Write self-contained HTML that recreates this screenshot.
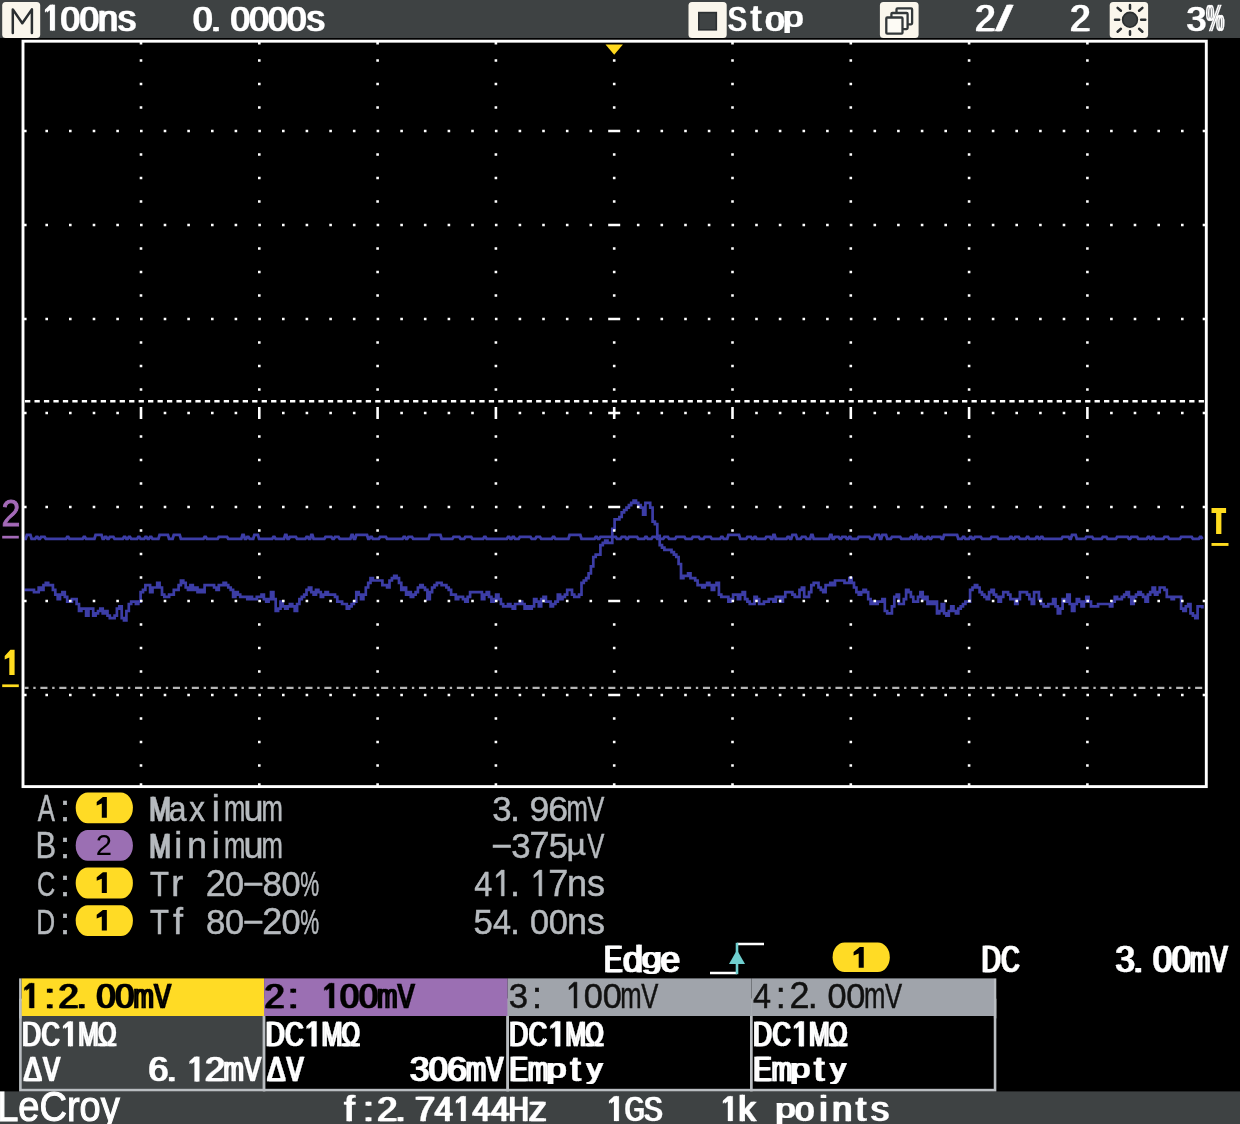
<!DOCTYPE html>
<html><head><meta charset="utf-8"><title>LeCroy</title>
<style>
html,body{margin:0;padding:0;background:#000;}
body{width:1240px;height:1124px;position:relative;overflow:hidden;font-family:"Liberation Sans",sans-serif;}
.abs{position:absolute;}
.bar{position:absolute;left:0;width:1240px;background:#3e4243;}
</style></head><body>
<svg class="abs" style="left:0;top:0;will-change:transform" width="1240" height="1124" viewBox="0 0 1240 1124">
<path d="M24.5 538.9H25.7L26.9 534.9H28.0H30.4L31.6 538.9H32.8H35.1L36.4 536.9H37.5L38.7 538.9H39.9L41.1 536.9H42.3H44.6L45.8 538.9H47.0H49.4H51.7H54.1H56.5H58.8H61.2H63.6H66.0L67.2 536.9H68.3L69.5 538.9H70.7H73.1H75.4H77.8H80.2H82.6L83.8 536.9H84.9L86.1 538.9H87.3H89.7H92.0H94.4L95.6 534.9H96.8H99.1H101.5L102.7 538.9H103.9L105.1 536.9H106.3L107.5 538.9H108.6L109.8 536.9H111.0H113.4L114.6 538.9H115.7H118.1H120.5H122.8L124.0 536.9H125.2L126.4 538.9H127.6L128.8 536.9H130.0L131.2 538.9H132.3H134.7H137.1L138.3 536.9H139.4L140.6 538.9H141.8H144.2L145.4 536.9H146.5L147.7 538.9H148.9L150.1 536.9H151.3L152.5 538.9H153.7H156.0H158.4L159.6 534.9H160.8H163.1H165.5H167.9L169.1 538.9H170.2H172.6L173.8 534.9H175.0H177.4H179.7L180.9 538.9H182.1H184.5H186.8H189.2H191.6H193.9H196.3H198.7H201.1H203.4L204.6 536.9H205.8L207.0 538.9H208.2H210.5H212.9H215.3H217.6L218.8 536.9H220.0H222.4H224.8H227.1L228.3 538.9H229.5H231.9H234.2H236.6H239.0H241.3L242.5 534.9H243.7L244.9 538.9H246.1L247.3 536.9H248.5L249.7 538.9H250.8H253.2L254.4 534.9H255.6H257.9L259.1 538.9H260.3H262.7H265.0H267.4H269.8H272.2L273.4 536.9H274.5L275.7 538.9H276.9H279.3H281.6H284.0L285.2 534.9H286.4L287.6 538.9H288.7L289.9 536.9H291.1H293.5H295.9L297.1 538.9H298.2H300.6H303.0H305.3L306.5 536.9H307.7L308.9 538.9H310.1L311.3 534.9H312.4L313.6 538.9H314.8H317.2H319.6H321.9H324.3L325.5 536.9H326.7H329.0H331.4L332.6 538.9H333.8L335.0 536.9H336.1H338.5L339.7 538.9H340.9H343.3H345.6H348.0H350.4L351.6 534.9H352.7L353.9 538.9H355.1L356.3 534.9H357.5H359.8H362.2H364.6H367.0L368.2 538.9H369.3L370.5 536.9H371.7L372.9 538.9H374.1H376.4H378.8L380.0 536.9H381.2H383.5H385.9L387.1 538.9H388.3H390.7H393.0H395.4H397.8H400.1H402.5L403.7 536.9H404.9L406.1 538.9H407.2L408.4 536.9H409.6H412.0L413.2 538.9H414.4H416.7H419.1H421.5H423.8H426.2H428.6L429.8 534.9H430.9H433.3H435.7H438.1H440.4L441.6 538.9H442.8H445.2H447.5H449.9H452.3L453.5 536.9H454.6H457.0H459.4L460.6 538.9H461.8H464.1L465.3 536.9H466.5H468.9H471.2L472.4 538.9H473.6H476.0H478.3H480.7H483.1L484.3 536.9H485.5L486.7 538.9H487.8H490.2H492.6H494.9H497.3H499.7H502.0H504.4H506.8L508.0 536.9H509.2L510.4 538.9H511.5L512.7 536.9H513.9L515.1 538.9H516.3H518.6L519.8 536.9H521.0H523.4H525.7H528.1H530.5L531.7 538.9H532.9H535.2L536.4 536.9H537.6H540.0L541.2 538.9H542.3H544.7H547.1H549.4H551.8L553.0 536.9H554.2L555.4 538.9H556.6H558.9H561.3H563.7H566.0H568.4L569.6 534.9H570.8H573.1H575.5H577.9H580.3L581.5 538.9H582.6H585.0H587.4H589.7H592.1H594.5L595.7 536.9H596.8L598.0 538.9H599.2L600.4 536.9H601.6H604.0H606.3H608.7H611.1H613.4H615.8L617.0 538.9H618.2H620.5L621.7 536.9H622.9H625.3L626.5 538.9H627.7L628.9 536.9H630.0H632.4H634.8H637.1L638.3 538.9H639.5H641.9H644.2L645.4 536.9H646.6L647.8 538.9H649.0H651.4L652.6 536.9H653.7H656.1L657.3 538.9H658.5H660.8H663.2L664.4 536.9H665.6H667.9L669.1 538.9H670.3H672.7H675.1L676.3 536.9H677.4H679.8H682.2H684.5L685.7 538.9H686.9H689.3H691.6L692.8 536.9H694.0H696.4H698.8L700.0 538.9H701.1H703.5L704.7 536.9H705.9H708.2H710.6L711.8 538.9H713.0H715.3H717.7H720.1L721.3 536.9H722.5L723.7 538.9H724.8H727.2L728.4 534.9H729.6H731.9H734.3H736.7H739.0L740.2 538.9H741.4H743.8H746.2L747.4 536.9H748.5H750.9L752.1 538.9H753.3L754.5 536.9H755.6L756.8 538.9H758.0H760.4H762.7H765.1L766.3 536.9H767.5H769.9L771.1 538.9H772.2L773.4 534.9H774.6L775.8 538.9H777.0H779.3H781.7H784.1H786.4L787.6 536.9H788.8L790.0 538.9H791.2L792.4 534.9H793.6H795.9L797.1 538.9H798.3H800.7L801.9 536.9H803.0H805.4L806.6 538.9H807.8H810.1L811.3 534.9H812.5L813.7 538.9H814.9H817.3H819.6H822.0H824.4H826.7H829.1L830.3 534.9H831.5L832.7 538.9H833.8L835.0 536.9H836.2H838.6L839.8 538.9H841.0L842.2 536.9H843.3H845.7L846.9 538.9H848.1L849.3 536.9H850.4L851.6 538.9H852.8H855.2H857.5L858.7 536.9H859.9H862.3H864.7H867.0H869.4L870.6 538.9H871.8H874.1L875.3 534.9H876.5H878.9L880.1 538.9H881.2L882.4 534.9H883.6H886.0L887.2 538.9H888.4H890.7L891.9 536.9H893.1H895.5H897.8H900.2L901.4 538.9H902.6H904.9H907.3H909.7L910.9 536.9H912.1L913.3 538.9H914.4L915.6 534.9H916.8L918.0 538.9H919.2L920.4 536.9H921.5L922.7 538.9H923.9H926.3L927.5 536.9H928.6L929.8 538.9H931.0L932.2 536.9H933.4H935.8H938.1H940.5L941.7 538.9H942.9L944.1 534.9H945.2H947.6H950.0H952.3H954.7H957.1L958.3 538.9H959.5H961.8L963.0 536.9H964.2L965.4 538.9H966.6H968.9L970.1 536.9H971.3L972.5 538.9H973.7L974.9 536.9H976.0H978.4H980.8L982.0 538.9H983.2H985.5H987.9H990.3L991.5 536.9H992.6H995.0H997.4L998.6 538.9H999.7H1002.1H1004.5H1006.9H1009.2L1010.4 536.9H1011.6L1012.8 538.9H1014.0L1015.2 536.9H1016.3H1018.7L1019.9 538.9H1021.1H1023.4H1025.8L1027.0 536.9H1028.2L1029.4 538.9H1030.6H1032.9H1035.3L1036.5 536.9H1037.7L1038.9 538.9H1040.0L1041.2 536.9H1042.4L1043.6 538.9H1044.8H1047.1H1049.5H1051.9H1054.3H1056.6H1059.0H1061.4L1062.6 536.9H1063.7H1066.1H1068.5L1069.7 538.9H1070.8L1072.0 534.9H1073.2H1075.6L1076.8 538.9H1077.9H1080.3H1082.7H1085.1L1086.3 536.9H1087.4H1089.8H1092.2L1093.4 538.9H1094.5H1096.9H1099.3H1101.6L1102.8 536.9H1104.0H1106.4L1107.6 538.9H1108.8H1111.1H1113.5H1115.9L1117.1 536.9H1118.2H1120.6H1123.0H1125.3H1127.7L1128.9 538.9H1130.1L1131.3 536.9H1132.5H1134.8H1137.2L1138.4 538.9H1139.6H1141.9H1144.3H1146.7L1147.9 536.9H1149.0L1150.2 538.9H1151.4L1152.6 536.9H1153.8L1155.0 538.9H1156.2H1158.5H1160.9H1163.3L1164.5 536.9H1165.6H1168.0L1169.2 538.9H1170.4H1172.7H1175.1H1177.5H1179.9L1181.1 536.9H1182.2H1184.6H1187.0H1189.3H1191.7L1192.9 538.9H1194.1H1196.4H1198.8L1200.0 536.9H1201.2L1202.4 538.9" stroke="#3c3da6" stroke-width="2.9" fill="none" stroke-linejoin="miter"/>
<path d="M24.5 589.9H26.9H29.2H31.6H34.0V592.2H36.4H38.7V587.5H41.1V589.9H43.5V585.1H45.8V582.8H48.2V585.1H50.6H52.9V589.9H55.3V594.6H57.7V599.2H60.0V594.6H62.4V592.2H64.8V596.9H67.2V601.6H69.5H71.9V599.2H74.3H76.6V604.0H79.0V611.0H81.4V608.6H83.8H86.1V615.7H88.5V608.6H90.9H93.2V615.7H95.6V613.4H98.0V611.0H100.3V608.6H102.7V613.4H105.1V611.0H107.5V615.7H109.8V618.1H112.2H114.6V615.7H116.9V608.6H119.3V606.3H121.7V618.1H124.0V620.4H126.4V611.0H128.8V604.0H131.2V601.6H133.5H135.9V604.0H138.3V601.6H140.6V592.2H143.0V589.9H145.4V585.1H147.7H150.1V592.2H152.5V587.5H154.9H157.2V582.8H159.6V587.5H162.0V594.6H164.3V596.9H166.7H169.1V594.6H171.4H173.8V589.9H176.2H178.6V585.1H180.9V580.5H183.3V582.8H185.7V587.5H188.0V589.9H190.4V585.1H192.8V589.9H195.1V587.5H197.5V592.2H199.9V589.9H202.3V592.2H204.6V585.1H207.0H209.4H211.7H214.1V587.5H216.5V589.9H218.8V585.1H221.2H223.6V582.8H226.0V585.1H228.3V587.5H230.7V589.9H233.1V596.9H235.4V592.2H237.8V594.6H240.2V596.9H242.5H244.9H247.3V599.2H249.7V596.9H252.0V599.2H254.4H256.8V596.9H259.1H261.5V594.6H263.9V599.2H266.2V601.6H268.6V599.2H271.0V592.2H273.4V599.2H275.7V611.0H278.1V608.6H280.5V601.6H282.8V606.3H285.2V608.6H287.6V606.3H289.9V604.0H292.3V606.3H294.7V611.0H297.1V604.0H299.4V599.2H301.8V596.9H304.2V594.6H306.5V589.9H308.9V587.5H311.3V592.2H313.6V594.6H316.0V589.9H318.4V592.2H320.8V596.9H323.1V594.6H325.5V592.2H327.9V594.6H330.2H332.6H335.0V596.9H337.3V601.6H339.7H342.1V604.0H344.5H346.8V608.6H349.2V606.3H351.6V604.0H353.9V601.6H356.3V592.2H358.7V594.6H361.0V599.2H363.4V594.6H365.8V587.5H368.2V582.8H370.5V578.1H372.9V580.5H375.3H377.6H380.0H382.4V585.1H384.7H387.1V587.5H389.5V580.5H391.9V578.1H394.2V575.8H396.6V578.1H399.0V582.8H401.3V589.9H403.7V587.5H406.1V594.6H408.4V592.2H410.8V596.9H413.2V594.6H415.6V592.2H417.9V587.5H420.3V585.1H422.7V587.5H425.0V589.9H427.4V599.2H429.8V592.2H432.1V587.5H434.5V585.1H436.9V582.8H439.3H441.6V585.1H444.0H446.4V587.5H448.7V589.9H451.1V594.6H453.5H455.8V599.2H458.2V596.9H460.6H463.0V599.2H465.3V601.6H467.7V596.9H470.1V592.2H472.4H474.8H477.2H479.5H481.9V599.2H484.3V594.6H486.7V592.2H489.0V596.9H491.4V601.6H493.8V599.2H496.1V594.6H498.5V599.2H500.9V604.0H503.2V606.3H505.6H508.0V604.0H510.4V606.3H512.7V608.6H515.1V604.0H517.5H519.8V601.6H522.2V604.0H524.6V608.6H526.9V606.3H529.3V608.6H531.7V606.3H534.1V599.2H536.4V601.6H538.8V606.3H541.2V599.2H543.5V596.9H545.9V601.6H548.3H550.6V606.3H553.0V604.0H555.4V601.6H557.8V594.6H560.1V599.2H562.5V596.9H564.9V594.6H567.2V589.9H569.6H572.0V594.6H574.3V596.9H576.7H579.1V594.6H581.5V582.8H583.8V580.5H586.2V578.1H588.6V573.4H590.9V566.4H593.3V557.0H595.7V554.6H598.0H600.4V545.2H602.8V542.9H605.2V540.5H607.5V542.9H609.9H612.3V528.8H614.6V519.4H617.0H619.4V517.0H621.7V512.3H624.1V510.0H626.5V507.6H628.9V505.2H631.2V502.9H633.6V500.6H636.0V502.9H638.3V505.2H640.7V507.6H643.1V514.6H645.4V502.9H647.8H650.2V507.6H652.6V521.7H654.9V524.1H657.3V535.8H659.7V545.2H662.0V547.6H664.4V549.9H666.8H669.1H671.5V552.2H673.9V554.6H676.3V557.0H678.6V564.0H681.0V578.1H683.4V575.8H685.7H688.1V573.4H690.5V578.1H692.8H695.2V580.5H697.6V585.1H700.0H702.3V587.5H704.7V585.1H707.1V582.8H709.4V585.1H711.8V589.9H714.2V585.1H716.5V582.8H718.9V594.6H721.3V596.9H723.7H726.0H728.4V601.6H730.8V599.2H733.1V594.6H735.5H737.9V599.2H740.2V594.6H742.6V592.2H745.0V599.2H747.4V601.6H749.7V604.0H752.1H754.5V596.9H756.8V599.2H759.2V604.0H761.6H763.9V601.6H766.3H768.7V599.2H771.1H773.4V601.6H775.8V596.9H778.2H780.5V601.6H782.9V596.9H785.3V592.2H787.6H790.0H792.4V594.6H794.8V596.9H797.1H799.5V589.9H801.9V587.5H804.2V596.9H806.6H809.0V592.2H811.3V585.1H813.7V582.8H816.1H818.5V587.5H820.8V589.9H823.2V592.2H825.6V585.1H827.9H830.3V582.8H832.7V585.1H835.0V580.5H837.4H839.8H842.2H844.5V582.8H846.9H849.3V578.1H851.6V582.8H854.0V587.5H856.4V592.2H858.7V594.6H861.1V592.2H863.5V589.9H865.9V592.2H868.2V599.2H870.6V604.0H873.0V601.6H875.3V604.0H877.7V601.6H880.1H882.4V599.2H884.8V611.0H887.2V613.4H889.6H891.9V606.3H894.3V596.9H896.7V594.6H899.0V604.0H901.4H903.8V599.2H906.1V589.9H908.5V592.2H910.9V596.9H913.3V601.6H915.6H918.0V596.9H920.4V592.2H922.7V599.2H925.1V596.9H927.5V604.0H929.8V601.6H932.2V604.0H934.6V601.6H937.0V613.4H939.3V611.0H941.7V604.0H944.1V613.4H946.4V615.7H948.8V611.0H951.2V606.3H953.5V611.0H955.9V613.4H958.3V608.6H960.7V606.3H963.0V604.0H965.4V601.6H967.8H970.1V589.9H972.5V587.5H974.9V585.1H977.2V587.5H979.6V592.2H982.0V594.6H984.4V596.9H986.7V599.2H989.1V592.2H991.5V589.9H993.8V594.6H996.2V596.9H998.6V601.6H1000.9V596.9H1003.3V592.2H1005.7H1008.1V594.6H1010.4V599.2H1012.8H1015.2V604.0H1017.5V599.2H1019.9V592.2H1022.3H1024.6H1027.0V594.6H1029.4V599.2H1031.8V604.0H1034.1V592.2H1036.5H1038.9V599.2H1041.2V604.0H1043.6V606.3H1046.0H1048.3V604.0H1050.7H1053.1V599.2H1055.5V606.3H1057.8V613.4H1060.2V608.6H1062.6V599.2H1064.9V601.6H1067.3V594.6H1069.7V604.0H1072.0V611.0H1074.4V604.0H1076.8V599.2H1079.1V601.6H1081.5V606.3H1083.9V601.6H1086.3V596.9H1088.6V601.6H1091.0V606.3H1093.4H1095.7H1098.1V604.0H1100.5H1102.8H1105.2H1107.6H1110.0V606.3H1112.3V601.6H1114.7V596.9H1117.1V599.2H1119.4H1121.8V596.9H1124.2V594.6H1126.5V592.2H1128.9V596.9H1131.3V604.0H1133.7V596.9H1136.0V594.6H1138.4V592.2H1140.8V594.6H1143.1V596.9H1145.5V601.6H1147.9V594.6H1150.2V592.2H1152.6V587.5H1155.0V594.6H1157.4V592.2H1159.7V587.5H1162.1H1164.5V589.9H1166.8V596.9H1169.2H1171.6V599.2H1173.9V596.9H1176.3H1178.7H1181.1V608.6H1183.4V611.0H1185.8V606.3H1188.2V604.0H1190.5V613.4H1192.9V615.7H1195.3V618.1H1197.6V606.3H1200.0H1202.4V608.6" stroke="#3c3da6" stroke-width="2.7" fill="none" stroke-linejoin="miter"/>
<rect x="23.0" y="41.2" width="1183.3" height="745.4" fill="none" stroke="#fff" stroke-width="2.9"/>
<path d="M45.4 129.7h2.6v2.6h-2.6zM69.0 129.7h2.6v2.6h-2.6zM92.7 129.7h2.6v2.6h-2.6zM116.3 129.7h2.6v2.6h-2.6zM140.0 129.7h2.6v2.6h-2.6zM163.7 129.7h2.6v2.6h-2.6zM187.3 129.7h2.6v2.6h-2.6zM211.0 129.7h2.6v2.6h-2.6zM234.6 129.7h2.6v2.6h-2.6zM258.3 129.7h2.6v2.6h-2.6zM282.0 129.7h2.6v2.6h-2.6zM305.6 129.7h2.6v2.6h-2.6zM329.3 129.7h2.6v2.6h-2.6zM352.9 129.7h2.6v2.6h-2.6zM376.6 129.7h2.6v2.6h-2.6zM400.3 129.7h2.6v2.6h-2.6zM423.9 129.7h2.6v2.6h-2.6zM447.6 129.7h2.6v2.6h-2.6zM471.2 129.7h2.6v2.6h-2.6zM494.9 129.7h2.6v2.6h-2.6zM518.6 129.7h2.6v2.6h-2.6zM542.2 129.7h2.6v2.6h-2.6zM565.9 129.7h2.6v2.6h-2.6zM589.5 129.7h2.6v2.6h-2.6zM636.9 129.7h2.6v2.6h-2.6zM660.5 129.7h2.6v2.6h-2.6zM684.2 129.7h2.6v2.6h-2.6zM707.8 129.7h2.6v2.6h-2.6zM731.5 129.7h2.6v2.6h-2.6zM755.2 129.7h2.6v2.6h-2.6zM778.8 129.7h2.6v2.6h-2.6zM802.5 129.7h2.6v2.6h-2.6zM826.1 129.7h2.6v2.6h-2.6zM849.8 129.7h2.6v2.6h-2.6zM873.5 129.7h2.6v2.6h-2.6zM897.1 129.7h2.6v2.6h-2.6zM920.8 129.7h2.6v2.6h-2.6zM944.4 129.7h2.6v2.6h-2.6zM968.1 129.7h2.6v2.6h-2.6zM991.8 129.7h2.6v2.6h-2.6zM1015.4 129.7h2.6v2.6h-2.6zM1039.1 129.7h2.6v2.6h-2.6zM1062.7 129.7h2.6v2.6h-2.6zM1086.4 129.7h2.6v2.6h-2.6zM1110.1 129.7h2.6v2.6h-2.6zM1133.7 129.7h2.6v2.6h-2.6zM1157.4 129.7h2.6v2.6h-2.6zM1181.0 129.7h2.6v2.6h-2.6zM45.4 223.7h2.6v2.6h-2.6zM69.0 223.7h2.6v2.6h-2.6zM92.7 223.7h2.6v2.6h-2.6zM116.3 223.7h2.6v2.6h-2.6zM140.0 223.7h2.6v2.6h-2.6zM163.7 223.7h2.6v2.6h-2.6zM187.3 223.7h2.6v2.6h-2.6zM211.0 223.7h2.6v2.6h-2.6zM234.6 223.7h2.6v2.6h-2.6zM258.3 223.7h2.6v2.6h-2.6zM282.0 223.7h2.6v2.6h-2.6zM305.6 223.7h2.6v2.6h-2.6zM329.3 223.7h2.6v2.6h-2.6zM352.9 223.7h2.6v2.6h-2.6zM376.6 223.7h2.6v2.6h-2.6zM400.3 223.7h2.6v2.6h-2.6zM423.9 223.7h2.6v2.6h-2.6zM447.6 223.7h2.6v2.6h-2.6zM471.2 223.7h2.6v2.6h-2.6zM494.9 223.7h2.6v2.6h-2.6zM518.6 223.7h2.6v2.6h-2.6zM542.2 223.7h2.6v2.6h-2.6zM565.9 223.7h2.6v2.6h-2.6zM589.5 223.7h2.6v2.6h-2.6zM636.9 223.7h2.6v2.6h-2.6zM660.5 223.7h2.6v2.6h-2.6zM684.2 223.7h2.6v2.6h-2.6zM707.8 223.7h2.6v2.6h-2.6zM731.5 223.7h2.6v2.6h-2.6zM755.2 223.7h2.6v2.6h-2.6zM778.8 223.7h2.6v2.6h-2.6zM802.5 223.7h2.6v2.6h-2.6zM826.1 223.7h2.6v2.6h-2.6zM849.8 223.7h2.6v2.6h-2.6zM873.5 223.7h2.6v2.6h-2.6zM897.1 223.7h2.6v2.6h-2.6zM920.8 223.7h2.6v2.6h-2.6zM944.4 223.7h2.6v2.6h-2.6zM968.1 223.7h2.6v2.6h-2.6zM991.8 223.7h2.6v2.6h-2.6zM1015.4 223.7h2.6v2.6h-2.6zM1039.1 223.7h2.6v2.6h-2.6zM1062.7 223.7h2.6v2.6h-2.6zM1086.4 223.7h2.6v2.6h-2.6zM1110.1 223.7h2.6v2.6h-2.6zM1133.7 223.7h2.6v2.6h-2.6zM1157.4 223.7h2.6v2.6h-2.6zM1181.0 223.7h2.6v2.6h-2.6zM45.4 317.7h2.6v2.6h-2.6zM69.0 317.7h2.6v2.6h-2.6zM92.7 317.7h2.6v2.6h-2.6zM116.3 317.7h2.6v2.6h-2.6zM140.0 317.7h2.6v2.6h-2.6zM163.7 317.7h2.6v2.6h-2.6zM187.3 317.7h2.6v2.6h-2.6zM211.0 317.7h2.6v2.6h-2.6zM234.6 317.7h2.6v2.6h-2.6zM258.3 317.7h2.6v2.6h-2.6zM282.0 317.7h2.6v2.6h-2.6zM305.6 317.7h2.6v2.6h-2.6zM329.3 317.7h2.6v2.6h-2.6zM352.9 317.7h2.6v2.6h-2.6zM376.6 317.7h2.6v2.6h-2.6zM400.3 317.7h2.6v2.6h-2.6zM423.9 317.7h2.6v2.6h-2.6zM447.6 317.7h2.6v2.6h-2.6zM471.2 317.7h2.6v2.6h-2.6zM494.9 317.7h2.6v2.6h-2.6zM518.6 317.7h2.6v2.6h-2.6zM542.2 317.7h2.6v2.6h-2.6zM565.9 317.7h2.6v2.6h-2.6zM589.5 317.7h2.6v2.6h-2.6zM636.9 317.7h2.6v2.6h-2.6zM660.5 317.7h2.6v2.6h-2.6zM684.2 317.7h2.6v2.6h-2.6zM707.8 317.7h2.6v2.6h-2.6zM731.5 317.7h2.6v2.6h-2.6zM755.2 317.7h2.6v2.6h-2.6zM778.8 317.7h2.6v2.6h-2.6zM802.5 317.7h2.6v2.6h-2.6zM826.1 317.7h2.6v2.6h-2.6zM849.8 317.7h2.6v2.6h-2.6zM873.5 317.7h2.6v2.6h-2.6zM897.1 317.7h2.6v2.6h-2.6zM920.8 317.7h2.6v2.6h-2.6zM944.4 317.7h2.6v2.6h-2.6zM968.1 317.7h2.6v2.6h-2.6zM991.8 317.7h2.6v2.6h-2.6zM1015.4 317.7h2.6v2.6h-2.6zM1039.1 317.7h2.6v2.6h-2.6zM1062.7 317.7h2.6v2.6h-2.6zM1086.4 317.7h2.6v2.6h-2.6zM1110.1 317.7h2.6v2.6h-2.6zM1133.7 317.7h2.6v2.6h-2.6zM1157.4 317.7h2.6v2.6h-2.6zM1181.0 317.7h2.6v2.6h-2.6zM45.4 411.7h2.6v2.6h-2.6zM69.0 411.7h2.6v2.6h-2.6zM92.7 411.7h2.6v2.6h-2.6zM116.3 411.7h2.6v2.6h-2.6zM163.7 411.7h2.6v2.6h-2.6zM187.3 411.7h2.6v2.6h-2.6zM211.0 411.7h2.6v2.6h-2.6zM234.6 411.7h2.6v2.6h-2.6zM282.0 411.7h2.6v2.6h-2.6zM305.6 411.7h2.6v2.6h-2.6zM329.3 411.7h2.6v2.6h-2.6zM352.9 411.7h2.6v2.6h-2.6zM400.3 411.7h2.6v2.6h-2.6zM423.9 411.7h2.6v2.6h-2.6zM447.6 411.7h2.6v2.6h-2.6zM471.2 411.7h2.6v2.6h-2.6zM518.6 411.7h2.6v2.6h-2.6zM542.2 411.7h2.6v2.6h-2.6zM565.9 411.7h2.6v2.6h-2.6zM589.5 411.7h2.6v2.6h-2.6zM636.9 411.7h2.6v2.6h-2.6zM660.5 411.7h2.6v2.6h-2.6zM684.2 411.7h2.6v2.6h-2.6zM707.8 411.7h2.6v2.6h-2.6zM755.2 411.7h2.6v2.6h-2.6zM778.8 411.7h2.6v2.6h-2.6zM802.5 411.7h2.6v2.6h-2.6zM826.1 411.7h2.6v2.6h-2.6zM873.5 411.7h2.6v2.6h-2.6zM897.1 411.7h2.6v2.6h-2.6zM920.8 411.7h2.6v2.6h-2.6zM944.4 411.7h2.6v2.6h-2.6zM991.8 411.7h2.6v2.6h-2.6zM1015.4 411.7h2.6v2.6h-2.6zM1039.1 411.7h2.6v2.6h-2.6zM1062.7 411.7h2.6v2.6h-2.6zM1110.1 411.7h2.6v2.6h-2.6zM1133.7 411.7h2.6v2.6h-2.6zM1157.4 411.7h2.6v2.6h-2.6zM1181.0 411.7h2.6v2.6h-2.6zM45.4 505.7h2.6v2.6h-2.6zM69.0 505.7h2.6v2.6h-2.6zM92.7 505.7h2.6v2.6h-2.6zM116.3 505.7h2.6v2.6h-2.6zM140.0 505.7h2.6v2.6h-2.6zM163.7 505.7h2.6v2.6h-2.6zM187.3 505.7h2.6v2.6h-2.6zM211.0 505.7h2.6v2.6h-2.6zM234.6 505.7h2.6v2.6h-2.6zM258.3 505.7h2.6v2.6h-2.6zM282.0 505.7h2.6v2.6h-2.6zM305.6 505.7h2.6v2.6h-2.6zM329.3 505.7h2.6v2.6h-2.6zM352.9 505.7h2.6v2.6h-2.6zM376.6 505.7h2.6v2.6h-2.6zM400.3 505.7h2.6v2.6h-2.6zM423.9 505.7h2.6v2.6h-2.6zM447.6 505.7h2.6v2.6h-2.6zM471.2 505.7h2.6v2.6h-2.6zM494.9 505.7h2.6v2.6h-2.6zM518.6 505.7h2.6v2.6h-2.6zM542.2 505.7h2.6v2.6h-2.6zM565.9 505.7h2.6v2.6h-2.6zM589.5 505.7h2.6v2.6h-2.6zM636.9 505.7h2.6v2.6h-2.6zM660.5 505.7h2.6v2.6h-2.6zM684.2 505.7h2.6v2.6h-2.6zM707.8 505.7h2.6v2.6h-2.6zM731.5 505.7h2.6v2.6h-2.6zM755.2 505.7h2.6v2.6h-2.6zM778.8 505.7h2.6v2.6h-2.6zM802.5 505.7h2.6v2.6h-2.6zM826.1 505.7h2.6v2.6h-2.6zM849.8 505.7h2.6v2.6h-2.6zM873.5 505.7h2.6v2.6h-2.6zM897.1 505.7h2.6v2.6h-2.6zM920.8 505.7h2.6v2.6h-2.6zM944.4 505.7h2.6v2.6h-2.6zM968.1 505.7h2.6v2.6h-2.6zM991.8 505.7h2.6v2.6h-2.6zM1015.4 505.7h2.6v2.6h-2.6zM1039.1 505.7h2.6v2.6h-2.6zM1062.7 505.7h2.6v2.6h-2.6zM1086.4 505.7h2.6v2.6h-2.6zM1110.1 505.7h2.6v2.6h-2.6zM1133.7 505.7h2.6v2.6h-2.6zM1157.4 505.7h2.6v2.6h-2.6zM1181.0 505.7h2.6v2.6h-2.6zM45.4 599.7h2.6v2.6h-2.6zM69.0 599.7h2.6v2.6h-2.6zM92.7 599.7h2.6v2.6h-2.6zM116.3 599.7h2.6v2.6h-2.6zM140.0 599.7h2.6v2.6h-2.6zM163.7 599.7h2.6v2.6h-2.6zM187.3 599.7h2.6v2.6h-2.6zM211.0 599.7h2.6v2.6h-2.6zM234.6 599.7h2.6v2.6h-2.6zM258.3 599.7h2.6v2.6h-2.6zM282.0 599.7h2.6v2.6h-2.6zM305.6 599.7h2.6v2.6h-2.6zM329.3 599.7h2.6v2.6h-2.6zM352.9 599.7h2.6v2.6h-2.6zM376.6 599.7h2.6v2.6h-2.6zM400.3 599.7h2.6v2.6h-2.6zM423.9 599.7h2.6v2.6h-2.6zM447.6 599.7h2.6v2.6h-2.6zM471.2 599.7h2.6v2.6h-2.6zM494.9 599.7h2.6v2.6h-2.6zM518.6 599.7h2.6v2.6h-2.6zM542.2 599.7h2.6v2.6h-2.6zM565.9 599.7h2.6v2.6h-2.6zM589.5 599.7h2.6v2.6h-2.6zM636.9 599.7h2.6v2.6h-2.6zM660.5 599.7h2.6v2.6h-2.6zM684.2 599.7h2.6v2.6h-2.6zM707.8 599.7h2.6v2.6h-2.6zM731.5 599.7h2.6v2.6h-2.6zM755.2 599.7h2.6v2.6h-2.6zM778.8 599.7h2.6v2.6h-2.6zM802.5 599.7h2.6v2.6h-2.6zM826.1 599.7h2.6v2.6h-2.6zM849.8 599.7h2.6v2.6h-2.6zM873.5 599.7h2.6v2.6h-2.6zM897.1 599.7h2.6v2.6h-2.6zM920.8 599.7h2.6v2.6h-2.6zM944.4 599.7h2.6v2.6h-2.6zM968.1 599.7h2.6v2.6h-2.6zM991.8 599.7h2.6v2.6h-2.6zM1015.4 599.7h2.6v2.6h-2.6zM1039.1 599.7h2.6v2.6h-2.6zM1062.7 599.7h2.6v2.6h-2.6zM1086.4 599.7h2.6v2.6h-2.6zM1110.1 599.7h2.6v2.6h-2.6zM1133.7 599.7h2.6v2.6h-2.6zM1157.4 599.7h2.6v2.6h-2.6zM1181.0 599.7h2.6v2.6h-2.6zM45.4 693.7h2.6v2.6h-2.6zM69.0 693.7h2.6v2.6h-2.6zM92.7 693.7h2.6v2.6h-2.6zM116.3 693.7h2.6v2.6h-2.6zM140.0 693.7h2.6v2.6h-2.6zM163.7 693.7h2.6v2.6h-2.6zM187.3 693.7h2.6v2.6h-2.6zM211.0 693.7h2.6v2.6h-2.6zM234.6 693.7h2.6v2.6h-2.6zM258.3 693.7h2.6v2.6h-2.6zM282.0 693.7h2.6v2.6h-2.6zM305.6 693.7h2.6v2.6h-2.6zM329.3 693.7h2.6v2.6h-2.6zM352.9 693.7h2.6v2.6h-2.6zM376.6 693.7h2.6v2.6h-2.6zM400.3 693.7h2.6v2.6h-2.6zM423.9 693.7h2.6v2.6h-2.6zM447.6 693.7h2.6v2.6h-2.6zM471.2 693.7h2.6v2.6h-2.6zM494.9 693.7h2.6v2.6h-2.6zM518.6 693.7h2.6v2.6h-2.6zM542.2 693.7h2.6v2.6h-2.6zM565.9 693.7h2.6v2.6h-2.6zM589.5 693.7h2.6v2.6h-2.6zM636.9 693.7h2.6v2.6h-2.6zM660.5 693.7h2.6v2.6h-2.6zM684.2 693.7h2.6v2.6h-2.6zM707.8 693.7h2.6v2.6h-2.6zM731.5 693.7h2.6v2.6h-2.6zM755.2 693.7h2.6v2.6h-2.6zM778.8 693.7h2.6v2.6h-2.6zM802.5 693.7h2.6v2.6h-2.6zM826.1 693.7h2.6v2.6h-2.6zM849.8 693.7h2.6v2.6h-2.6zM873.5 693.7h2.6v2.6h-2.6zM897.1 693.7h2.6v2.6h-2.6zM920.8 693.7h2.6v2.6h-2.6zM944.4 693.7h2.6v2.6h-2.6zM968.1 693.7h2.6v2.6h-2.6zM991.8 693.7h2.6v2.6h-2.6zM1015.4 693.7h2.6v2.6h-2.6zM1039.1 693.7h2.6v2.6h-2.6zM1062.7 693.7h2.6v2.6h-2.6zM1086.4 693.7h2.6v2.6h-2.6zM1110.1 693.7h2.6v2.6h-2.6zM1133.7 693.7h2.6v2.6h-2.6zM1157.4 693.7h2.6v2.6h-2.6zM1181.0 693.7h2.6v2.6h-2.6zM139.7 59.2h2.6v2.6h-2.6zM139.7 82.7h2.6v2.6h-2.6zM139.7 106.2h2.6v2.6h-2.6zM139.7 153.2h2.6v2.6h-2.6zM139.7 176.7h2.6v2.6h-2.6zM139.7 200.2h2.6v2.6h-2.6zM139.7 247.2h2.6v2.6h-2.6zM139.7 270.7h2.6v2.6h-2.6zM139.7 294.2h2.6v2.6h-2.6zM139.7 341.2h2.6v2.6h-2.6zM139.7 364.7h2.6v2.6h-2.6zM139.7 388.2h2.6v2.6h-2.6zM139.7 435.2h2.6v2.6h-2.6zM139.7 458.7h2.6v2.6h-2.6zM139.7 482.2h2.6v2.6h-2.6zM139.7 529.2h2.6v2.6h-2.6zM139.7 552.7h2.6v2.6h-2.6zM139.7 576.2h2.6v2.6h-2.6zM139.7 623.2h2.6v2.6h-2.6zM139.7 646.7h2.6v2.6h-2.6zM139.7 670.2h2.6v2.6h-2.6zM139.7 717.2h2.6v2.6h-2.6zM139.7 740.7h2.6v2.6h-2.6zM139.7 764.2h2.6v2.6h-2.6zM258.0 59.2h2.6v2.6h-2.6zM258.0 82.7h2.6v2.6h-2.6zM258.0 106.2h2.6v2.6h-2.6zM258.0 153.2h2.6v2.6h-2.6zM258.0 176.7h2.6v2.6h-2.6zM258.0 200.2h2.6v2.6h-2.6zM258.0 247.2h2.6v2.6h-2.6zM258.0 270.7h2.6v2.6h-2.6zM258.0 294.2h2.6v2.6h-2.6zM258.0 341.2h2.6v2.6h-2.6zM258.0 364.7h2.6v2.6h-2.6zM258.0 388.2h2.6v2.6h-2.6zM258.0 435.2h2.6v2.6h-2.6zM258.0 458.7h2.6v2.6h-2.6zM258.0 482.2h2.6v2.6h-2.6zM258.0 529.2h2.6v2.6h-2.6zM258.0 552.7h2.6v2.6h-2.6zM258.0 576.2h2.6v2.6h-2.6zM258.0 623.2h2.6v2.6h-2.6zM258.0 646.7h2.6v2.6h-2.6zM258.0 670.2h2.6v2.6h-2.6zM258.0 717.2h2.6v2.6h-2.6zM258.0 740.7h2.6v2.6h-2.6zM258.0 764.2h2.6v2.6h-2.6zM376.3 59.2h2.6v2.6h-2.6zM376.3 82.7h2.6v2.6h-2.6zM376.3 106.2h2.6v2.6h-2.6zM376.3 153.2h2.6v2.6h-2.6zM376.3 176.7h2.6v2.6h-2.6zM376.3 200.2h2.6v2.6h-2.6zM376.3 247.2h2.6v2.6h-2.6zM376.3 270.7h2.6v2.6h-2.6zM376.3 294.2h2.6v2.6h-2.6zM376.3 341.2h2.6v2.6h-2.6zM376.3 364.7h2.6v2.6h-2.6zM376.3 388.2h2.6v2.6h-2.6zM376.3 435.2h2.6v2.6h-2.6zM376.3 458.7h2.6v2.6h-2.6zM376.3 482.2h2.6v2.6h-2.6zM376.3 529.2h2.6v2.6h-2.6zM376.3 552.7h2.6v2.6h-2.6zM376.3 576.2h2.6v2.6h-2.6zM376.3 623.2h2.6v2.6h-2.6zM376.3 646.7h2.6v2.6h-2.6zM376.3 670.2h2.6v2.6h-2.6zM376.3 717.2h2.6v2.6h-2.6zM376.3 740.7h2.6v2.6h-2.6zM376.3 764.2h2.6v2.6h-2.6zM494.6 59.2h2.6v2.6h-2.6zM494.6 82.7h2.6v2.6h-2.6zM494.6 106.2h2.6v2.6h-2.6zM494.6 153.2h2.6v2.6h-2.6zM494.6 176.7h2.6v2.6h-2.6zM494.6 200.2h2.6v2.6h-2.6zM494.6 247.2h2.6v2.6h-2.6zM494.6 270.7h2.6v2.6h-2.6zM494.6 294.2h2.6v2.6h-2.6zM494.6 341.2h2.6v2.6h-2.6zM494.6 364.7h2.6v2.6h-2.6zM494.6 388.2h2.6v2.6h-2.6zM494.6 435.2h2.6v2.6h-2.6zM494.6 458.7h2.6v2.6h-2.6zM494.6 482.2h2.6v2.6h-2.6zM494.6 529.2h2.6v2.6h-2.6zM494.6 552.7h2.6v2.6h-2.6zM494.6 576.2h2.6v2.6h-2.6zM494.6 623.2h2.6v2.6h-2.6zM494.6 646.7h2.6v2.6h-2.6zM494.6 670.2h2.6v2.6h-2.6zM494.6 717.2h2.6v2.6h-2.6zM494.6 740.7h2.6v2.6h-2.6zM494.6 764.2h2.6v2.6h-2.6zM612.9 59.2h2.6v2.6h-2.6zM612.9 82.7h2.6v2.6h-2.6zM612.9 106.2h2.6v2.6h-2.6zM612.9 153.2h2.6v2.6h-2.6zM612.9 176.7h2.6v2.6h-2.6zM612.9 200.2h2.6v2.6h-2.6zM612.9 247.2h2.6v2.6h-2.6zM612.9 270.7h2.6v2.6h-2.6zM612.9 294.2h2.6v2.6h-2.6zM612.9 341.2h2.6v2.6h-2.6zM612.9 364.7h2.6v2.6h-2.6zM612.9 388.2h2.6v2.6h-2.6zM612.9 435.2h2.6v2.6h-2.6zM612.9 458.7h2.6v2.6h-2.6zM612.9 482.2h2.6v2.6h-2.6zM612.9 529.2h2.6v2.6h-2.6zM612.9 552.7h2.6v2.6h-2.6zM612.9 576.2h2.6v2.6h-2.6zM612.9 623.2h2.6v2.6h-2.6zM612.9 646.7h2.6v2.6h-2.6zM612.9 670.2h2.6v2.6h-2.6zM612.9 717.2h2.6v2.6h-2.6zM612.9 740.7h2.6v2.6h-2.6zM612.9 764.2h2.6v2.6h-2.6zM731.2 59.2h2.6v2.6h-2.6zM731.2 82.7h2.6v2.6h-2.6zM731.2 106.2h2.6v2.6h-2.6zM731.2 153.2h2.6v2.6h-2.6zM731.2 176.7h2.6v2.6h-2.6zM731.2 200.2h2.6v2.6h-2.6zM731.2 247.2h2.6v2.6h-2.6zM731.2 270.7h2.6v2.6h-2.6zM731.2 294.2h2.6v2.6h-2.6zM731.2 341.2h2.6v2.6h-2.6zM731.2 364.7h2.6v2.6h-2.6zM731.2 388.2h2.6v2.6h-2.6zM731.2 435.2h2.6v2.6h-2.6zM731.2 458.7h2.6v2.6h-2.6zM731.2 482.2h2.6v2.6h-2.6zM731.2 529.2h2.6v2.6h-2.6zM731.2 552.7h2.6v2.6h-2.6zM731.2 576.2h2.6v2.6h-2.6zM731.2 623.2h2.6v2.6h-2.6zM731.2 646.7h2.6v2.6h-2.6zM731.2 670.2h2.6v2.6h-2.6zM731.2 717.2h2.6v2.6h-2.6zM731.2 740.7h2.6v2.6h-2.6zM731.2 764.2h2.6v2.6h-2.6zM849.5 59.2h2.6v2.6h-2.6zM849.5 82.7h2.6v2.6h-2.6zM849.5 106.2h2.6v2.6h-2.6zM849.5 153.2h2.6v2.6h-2.6zM849.5 176.7h2.6v2.6h-2.6zM849.5 200.2h2.6v2.6h-2.6zM849.5 247.2h2.6v2.6h-2.6zM849.5 270.7h2.6v2.6h-2.6zM849.5 294.2h2.6v2.6h-2.6zM849.5 341.2h2.6v2.6h-2.6zM849.5 364.7h2.6v2.6h-2.6zM849.5 388.2h2.6v2.6h-2.6zM849.5 435.2h2.6v2.6h-2.6zM849.5 458.7h2.6v2.6h-2.6zM849.5 482.2h2.6v2.6h-2.6zM849.5 529.2h2.6v2.6h-2.6zM849.5 552.7h2.6v2.6h-2.6zM849.5 576.2h2.6v2.6h-2.6zM849.5 623.2h2.6v2.6h-2.6zM849.5 646.7h2.6v2.6h-2.6zM849.5 670.2h2.6v2.6h-2.6zM849.5 717.2h2.6v2.6h-2.6zM849.5 740.7h2.6v2.6h-2.6zM849.5 764.2h2.6v2.6h-2.6zM967.8 59.2h2.6v2.6h-2.6zM967.8 82.7h2.6v2.6h-2.6zM967.8 106.2h2.6v2.6h-2.6zM967.8 153.2h2.6v2.6h-2.6zM967.8 176.7h2.6v2.6h-2.6zM967.8 200.2h2.6v2.6h-2.6zM967.8 247.2h2.6v2.6h-2.6zM967.8 270.7h2.6v2.6h-2.6zM967.8 294.2h2.6v2.6h-2.6zM967.8 341.2h2.6v2.6h-2.6zM967.8 364.7h2.6v2.6h-2.6zM967.8 388.2h2.6v2.6h-2.6zM967.8 435.2h2.6v2.6h-2.6zM967.8 458.7h2.6v2.6h-2.6zM967.8 482.2h2.6v2.6h-2.6zM967.8 529.2h2.6v2.6h-2.6zM967.8 552.7h2.6v2.6h-2.6zM967.8 576.2h2.6v2.6h-2.6zM967.8 623.2h2.6v2.6h-2.6zM967.8 646.7h2.6v2.6h-2.6zM967.8 670.2h2.6v2.6h-2.6zM967.8 717.2h2.6v2.6h-2.6zM967.8 740.7h2.6v2.6h-2.6zM967.8 764.2h2.6v2.6h-2.6zM1086.1 59.2h2.6v2.6h-2.6zM1086.1 82.7h2.6v2.6h-2.6zM1086.1 106.2h2.6v2.6h-2.6zM1086.1 153.2h2.6v2.6h-2.6zM1086.1 176.7h2.6v2.6h-2.6zM1086.1 200.2h2.6v2.6h-2.6zM1086.1 247.2h2.6v2.6h-2.6zM1086.1 270.7h2.6v2.6h-2.6zM1086.1 294.2h2.6v2.6h-2.6zM1086.1 341.2h2.6v2.6h-2.6zM1086.1 364.7h2.6v2.6h-2.6zM1086.1 388.2h2.6v2.6h-2.6zM1086.1 435.2h2.6v2.6h-2.6zM1086.1 458.7h2.6v2.6h-2.6zM1086.1 482.2h2.6v2.6h-2.6zM1086.1 529.2h2.6v2.6h-2.6zM1086.1 552.7h2.6v2.6h-2.6zM1086.1 576.2h2.6v2.6h-2.6zM1086.1 623.2h2.6v2.6h-2.6zM1086.1 646.7h2.6v2.6h-2.6zM1086.1 670.2h2.6v2.6h-2.6zM1086.1 717.2h2.6v2.6h-2.6zM1086.1 740.7h2.6v2.6h-2.6zM1086.1 764.2h2.6v2.6h-2.6z" fill="#fff"/>
<path d="M141.0 407.0v12M259.3 407.0v12M377.6 407.0v12M495.9 407.0v12M614.2 407.0v12M732.5 407.0v12M850.8 407.0v12M969.1 407.0v12M1087.4 407.0v12M608.2 131.0h12M608.2 225.0h12M608.2 319.0h12M608.2 413.0h12M608.2 507.0h12M608.2 601.0h12M608.2 695.0h12M141.0 41.2v3.4M141.0 786.6v-3.4M259.3 41.2v3.4M259.3 786.6v-3.4M377.6 41.2v3.4M377.6 786.6v-3.4M495.9 41.2v3.4M495.9 786.6v-3.4M614.2 786.6v-3.4M732.5 41.2v3.4M732.5 786.6v-3.4M850.8 41.2v3.4M850.8 786.6v-3.4M969.1 41.2v3.4M969.1 786.6v-3.4M1087.4 41.2v3.4M1087.4 786.6v-3.4M23.0 131.0h3.6M1206.3 131.0h-3.6M23.0 225.0h3.6M1206.3 225.0h-3.6M23.0 319.0h3.6M1206.3 319.0h-3.6M23.0 413.0h3.6M1206.3 413.0h-3.6M23.0 507.0h3.6M1206.3 507.0h-3.6M23.0 601.0h3.6M1206.3 601.0h-3.6M23.0 695.0h3.6M1206.3 695.0h-3.6" stroke="#fff" stroke-width="2.6" fill="none"/>
<line x1="25" y1="401.3" x2="1204.8" y2="401.3" stroke="#fff" stroke-width="2.5" stroke-dasharray="5.3 4.165"/>
<line x1="24.5" y1="687.9" x2="1204.8" y2="687.9" stroke="#b4b4b4" stroke-width="2.3" stroke-dasharray="7.1 4.73 2.37 4.73" stroke-dashoffset="3.05"/>
<path d="M605.5 44.5h17.4l-8.7 10.2z" fill="#ffd91e"/>
<text transform="matrix(0.93 0 0 1 1.6 526.2)" font-family="Liberation Sans, sans-serif" font-size="36.4" fill="#a46ab8" stroke="#a46ab8" stroke-width="0.9">2</text>
<rect x="2.2" y="535.8" width="16.6" height="2.7" fill="#a46ab8"/>
<path d="M14.6 649.8V675H9.3V657.6L4.7 659.6V656L10.4 649.8Z" fill="#ffdc1f"/>
<rect x="2.2" y="684.4" width="16.6" height="2.7" fill="#ffdc1f"/>
<path d="M1211.5 508h14.6v5h-4.7v20.9h-5.3V513h-4.6z" fill="#ffdc1f"/>
<rect x="1211.5" y="543" width="17" height="2.9" fill="#ffdc1f"/>
</svg><!-- top bar -->
<div class="bar" style="top:0;height:38px"></div>
<svg class="abs" style="left:0;top:0" width="1240" height="40" viewBox="0 0 1240 40">
<g fill="#faf6ec">
<rect x="2.2" y="2" width="38" height="35.9" rx="3.5"/>
<rect x="688.5" y="2" width="38.2" height="35.9" rx="3.5"/>
<rect x="879.9" y="2" width="38.7" height="35.9" rx="3.5"/>
<rect x="1109.7" y="2" width="38.4" height="35.9" rx="3.5"/>
</g>
<path d="M12.8 32.9V9.4L22.3 23.2L31.9 9.4V32.9" fill="none" stroke="#2a2e30" stroke-width="2.5" stroke-linecap="round" stroke-linejoin="round"/>
<rect x="698.8" y="12.6" width="17.5" height="17.2" fill="#3f4344" stroke="#2c3032" stroke-width="1.6"/>
<g fill="#fdfbf5" stroke="#33383a" stroke-width="2.3">
<rect x="896.5" y="8.4" width="15.6" height="15.9" rx="1"/>
<rect x="891.4" y="13" width="16.2" height="16.1" rx="1"/>
<rect x="886.3" y="17.5" width="16.2" height="16.2" rx="1"/>
</g>
<circle cx="1130" cy="19.8" r="7.4" fill="#3f4344" stroke="#2a2e30" stroke-width="1.6"/>
<path d="M1130 4.9v3.9M1130 31.2v3.6M1115 19.8h4.2M1141.1 19.8h4.2M1117.6 7.9l3.3 2.9M1142.4 7.9l-3.3 2.9M1117.6 31.7l3.3-2.9M1142.4 31.7l-3.3-2.9" fill="none" stroke="#2a2e30" stroke-width="2.5" stroke-linecap="round"/>
</svg>

<!-- measurements -->

<!-- trigger row -->
<svg class="abs" style="left:700px;top:936px" width="80" height="44" viewBox="700 936 80 44"><path d="M710 973h27M737 944h27" stroke="#fff" stroke-width="2.4" fill="none"/><path d="M737 974.2V942.8" stroke="#6fcfcf" stroke-width="2.6"/><path d="M729 964h16l-8-14z" fill="#6fcfcf"/></svg>

<!-- channel boxes -->
<svg class="abs" style="left:0;top:970px" width="1240" height="154" viewBox="0 970 1240 154">
<rect x="0" y="1091.4" width="1240" height="33" fill="#3e4243"/>
<rect x="20.4" y="1000" width="243.65" height="90.1" fill="#3f4344" stroke="#b9bdc1" stroke-width="2.6"/>
<rect x="264.1" y="1000" width="243.65" height="90.1" fill="#000" stroke="#b9bdc1" stroke-width="2.6"/>
<rect x="507.7" y="1000" width="243.65" height="90.1" fill="#000" stroke="#b9bdc1" stroke-width="2.6"/>
<rect x="751.4" y="1000" width="243.65" height="90.1" fill="#000" stroke="#b9bdc1" stroke-width="2.6"/>
<rect x="21.5" y="978.4" width="242.6" height="37.6" fill="#ffdb25"/>
<rect x="264.1" y="978.4" width="243.6" height="37.6" fill="#9b6fb3"/>
<rect x="507.7" y="978.4" width="243.6" height="37.6" fill="#a0a4ab"/>
<rect x="751.4" y="978.4" width="242.6" height="37.6" fill="#a0a4ab"/>
<rect x="19.1" y="978.4" width="2.4" height="40" fill="#b9bdc1"/>
<rect x="993.9" y="978.4" width="2.4" height="40" fill="#b9bdc1"/>
</svg>
<svg class="abs" style="left:0;top:1080px;will-change:transform" width="140" height="44" viewBox="0 1080 140 44"><text transform="matrix(0.905 0 0 1 -2.8 1121)" font-family="Liberation Sans, sans-serif" font-size="42" fill="#fff" stroke="#fff" stroke-width="1.1">LeCroy</text></svg>

<svg class="abs" style="left:0;top:0;will-change:transform" width="1240" height="1124" viewBox="0 0 1240 1124" font-family="Liberation Sans, sans-serif" font-size="36.0">
<g fill="#b6babe" stroke="#b6babe" stroke-width="0.5"><text transform="matrix(0.714 0 0 1.0 37.63 820.8)">A</text><text transform="matrix(1.000 0 0 1.0 60.00 820.8)">:</text><text transform="matrix(0.725 0 0 1.0 148.53 820.8)">M</text><text transform="matrix(0.725 0 0 1.0 150.03 820.8)">M</text><text transform="matrix(0.886 0 0 1.0 168.67 820.8)">a</text><text transform="matrix(0.872 0 0 1.0 189.15 820.8)">x</text><text transform="matrix(1.000 0 0 1.0 211.80 820.8)">i</text><text transform="matrix(0.714 0 0 1.0 223.89 820.8)">m</text><text transform="matrix(1.000 0 0 1.0 243.45 820.8)">u</text><text transform="matrix(0.714 0 0 1.0 261.49 820.8)">m</text><text transform="matrix(0.965 0 0 1.0 492.35 820.8)">3</text><text transform="matrix(1.000 0 0 1.0 510.10 820.8)">.</text><text transform="matrix(0.988 0 0 1.0 529.62 820.8)">9</text><text transform="matrix(0.988 0 0 1.0 548.32 820.8)">6</text><text transform="matrix(0.714 0 0 1.0 566.39 820.8)">m</text><text transform="matrix(0.712 0 0 1.0 587.36 820.8)">V</text><text transform="matrix(0.859 0 0 1.0 35.42 858.4)">B</text><text transform="matrix(1.000 0 0 1.0 60.00 858.4)">:</text><text transform="matrix(0.725 0 0 1.0 148.53 858.4)">M</text><text transform="matrix(0.725 0 0 1.0 150.03 858.4)">M</text><text transform="matrix(1.000 0 0 1.0 174.20 858.4)">i</text><text transform="matrix(1.000 0 0 1.0 186.95 858.4)">n</text><text transform="matrix(1.000 0 0 1.0 211.80 858.4)">i</text><text transform="matrix(0.714 0 0 1.0 223.89 858.4)">m</text><text transform="matrix(1.000 0 0 1.0 243.45 858.4)">u</text><text transform="matrix(0.714 0 0 1.0 261.49 858.4)">m</text><text transform="matrix(1.006 0 0 1.0 491.29 858.4)">&#8722;</text><text transform="matrix(0.965 0 0 1.0 511.15 858.4)">3</text><text transform="matrix(1.000 0 0 1.0 529.50 858.4)">7</text><text transform="matrix(0.965 0 0 1.0 548.65 858.4)">5</text><text transform="matrix(0.943 0 0 0.8 566.54 855.1)">&#181;</text><text transform="matrix(0.712 0 0 1.0 587.36 858.4)">V</text><text transform="matrix(0.702 0 0 1.0 36.94 895.9)">C</text><text transform="matrix(1.000 0 0 1.0 60.00 895.9)">:</text><text transform="matrix(0.863 0 0 1.0 149.91 895.9)">T</text><text transform="matrix(1.000 0 0 1.0 171.30 895.9)">r</text><text transform="matrix(1.000 0 0 1.0 205.80 895.9)">2</text><text transform="matrix(0.953 0 0 1.0 225.07 895.9)">0</text><text transform="matrix(1.006 0 0 1.0 242.79 895.9)">&#8722;</text><text transform="matrix(0.970 0 0 1.0 262.45 895.9)">8</text><text transform="matrix(0.953 0 0 1.0 281.47 895.9)">0</text><text transform="matrix(0.592 0 0 1.0 300.33 895.9)">%</text><text transform="matrix(0.901 0 0 1.0 474.18 895.9)">4</text><path transform="matrix(1 0 0 1.0 502.50 895.9)" d="M1.7 0V-25.8H-1.2L-6.2-21V-18.2L-1.2-22V0Z"/><text transform="matrix(1.000 0 0 1.0 510.10 895.9)">.</text><path transform="matrix(1 0 0 1.0 540.10 895.9)" d="M1.7 0V-25.8H-1.2L-6.2-21V-18.2L-1.2-22V0Z"/><text transform="matrix(1.000 0 0 1.0 548.30 895.9)">7</text><text transform="matrix(1.000 0 0 1.0 567.05 895.9)">n</text><text transform="matrix(1.000 0 0 1.0 587.05 895.9)">s</text><text transform="matrix(0.728 0 0 1.0 36.27 933.5)">D</text><text transform="matrix(1.000 0 0 1.0 60.00 933.5)">:</text><text transform="matrix(0.863 0 0 1.0 149.91 933.5)">T</text><text transform="matrix(1.000 0 0 1.0 172.90 933.5)">f</text><text transform="matrix(0.970 0 0 1.0 206.05 933.5)">8</text><text transform="matrix(0.953 0 0 1.0 225.07 933.5)">0</text><text transform="matrix(1.006 0 0 1.0 242.79 933.5)">&#8722;</text><text transform="matrix(1.000 0 0 1.0 262.20 933.5)">2</text><text transform="matrix(0.953 0 0 1.0 281.47 933.5)">0</text><text transform="matrix(0.592 0 0 1.0 300.33 933.5)">%</text><text transform="matrix(0.965 0 0 1.0 473.45 933.5)">5</text><text transform="matrix(0.901 0 0 1.0 492.98 933.5)">4</text><text transform="matrix(1.000 0 0 1.0 510.10 933.5)">.</text><text transform="matrix(0.953 0 0 1.0 529.97 933.5)">0</text><text transform="matrix(0.953 0 0 1.0 548.77 933.5)">0</text><text transform="matrix(1.000 0 0 1.0 567.05 933.5)">n</text><text transform="matrix(1.000 0 0 1.0 587.05 933.5)">s</text></g>
<g fill="#111" stroke="#111" stroke-width="0.5"><text transform="matrix(0.965 0 0 1.0 508.65 1008.0)">3</text><text transform="matrix(1.000 0 0 1.0 532.00 1008.0)">:</text><path transform="matrix(1 0 0 1.0 575.20 1008.0)" d="M1.7 0V-25.8H-1.2L-6.2-21V-18.2L-1.2-22V0Z"/><text transform="matrix(0.953 0 0 1.0 583.87 1008.0)">0</text><text transform="matrix(0.953 0 0 1.0 602.67 1008.0)">0</text><text transform="matrix(0.714 0 0 1.0 620.29 1008.0)">m</text><text transform="matrix(0.712 0 0 1.0 641.26 1008.0)">V</text><text transform="matrix(0.901 0 0 1.0 752.98 1008.0)">4</text><text transform="matrix(1.000 0 0 1.0 775.70 1008.0)">:</text><text transform="matrix(1.000 0 0 1.0 789.50 1008.0)">2</text><text transform="matrix(1.000 0 0 1.0 807.70 1008.0)">.</text><text transform="matrix(0.953 0 0 1.0 827.57 1008.0)">0</text><text transform="matrix(0.953 0 0 1.0 846.37 1008.0)">0</text><text transform="matrix(0.714 0 0 1.0 863.99 1008.0)">m</text><text transform="matrix(0.712 0 0 1.0 884.96 1008.0)">V</text></g>
<g transform="translate(75.7 792.4)"><rect width="57.2" height="30.8" rx="12" ry="15.4" fill="#ffdb25"/><path d="M31.15 4.7V25.35H26.1V11.2L21 13.2V9.6L27.2 4.7Z" fill="#000"/></g>
<g transform="translate(75.7 830)"><rect width="57.2" height="30.8" rx="12" ry="15.4" fill="#9b6fb3"/><text x="28.1" y="25.4" text-anchor="middle" font-size="29.3" fill="#000">2</text></g>
<g transform="translate(75.7 867.6)"><rect width="57.2" height="30.8" rx="12" ry="15.4" fill="#ffdb25"/><path d="M31.15 4.7V25.35H26.1V11.2L21 13.2V9.6L27.2 4.7Z" fill="#000"/></g>
<g transform="translate(75.7 905.2)"><rect width="57.2" height="30.8" rx="12" ry="15.4" fill="#ffdb25"/><path d="M31.15 4.7V25.35H26.1V11.2L21 13.2V9.6L27.2 4.7Z" fill="#000"/></g>
<g transform="translate(832.6 942.4)"><rect width="57.2" height="29.6" rx="12" ry="14.8" fill="#ffdb25"/><path d="M31.15 4.7V25.35H26.1V11.2L21 13.2V9.6L27.2 4.7Z" fill="#000"/></g>
</svg>
<svg class="abs" style="left:0;top:0;filter:drop-shadow(2.2px 0 0 #fff) drop-shadow(0 0 0.7px #23272a) drop-shadow(0 0 0.7px #23272a)" width="1240" height="1124" viewBox="0 0 1240 1124" font-family="Liberation Sans, sans-serif" font-size="36.0"><g fill="#fff" stroke="#fff" stroke-width="0.3"><path transform="matrix(1 0 0 1.0 51.20 30.6)" d="M1.7 0V-25.8H-1.2L-6.2-21V-18.2L-1.2-22V0Z"/><text transform="matrix(0.953 0 0 1.0 59.87 30.6)">0</text><text transform="matrix(0.953 0 0 1.0 78.67 30.6)">0</text><text transform="matrix(1.000 0 0 1.0 96.95 30.6)">n</text><text transform="matrix(1.000 0 0 1.0 116.95 30.6)">s</text><text transform="matrix(0.953 0 0 1.0 192.17 30.6)">0</text><text transform="matrix(1.000 0 0 1.0 209.90 30.6)">.</text><text transform="matrix(0.953 0 0 1.0 229.77 30.6)">0</text><text transform="matrix(0.953 0 0 1.0 248.57 30.6)">0</text><text transform="matrix(0.953 0 0 1.0 267.37 30.6)">0</text><text transform="matrix(0.953 0 0 1.0 286.17 30.6)">0</text><text transform="matrix(1.000 0 0 1.0 305.65 30.6)">s</text><text transform="matrix(0.769 0 0 1.0 727.07 30.6)">S</text><text transform="matrix(1.000 0 0 1.0 750.00 30.6)">t</text><text transform="matrix(0.965 0 0 1.0 764.25 30.6)">o</text><text transform="matrix(1.000 0 0 0.8 782.30 27.4)">p</text><text transform="matrix(1.000 0 0 1.0 974.30 30.6)">2</text><text transform="matrix(1.640 0 0 1.0 994.90 30.6)">/</text><text transform="matrix(1.000 0 0 1.0 1069.30 30.6)">2</text><text transform="matrix(0.965 0 0 1.0 1185.75 30.6)">3</text><text transform="matrix(0.558 0 0 1.0 1205.17 30.6)">%</text><text transform="matrix(0.769 0 0 1.01 602.99 971.5)">E</text><text transform="matrix(1.000 0 0 1.01 622.00 971.5)">d</text><text transform="matrix(1.000 0 0 0.808 640.80 968.3)">g</text><text transform="matrix(0.970 0 0 1.01 659.54 971.5)">e</text><text transform="matrix(0.728 0 0 1.01 980.87 971.5)">D</text><text transform="matrix(0.702 0 0 1.01 1000.34 971.5)">C</text><text transform="matrix(0.965 0 0 1.01 1114.45 971.5)">3</text><text transform="matrix(1.000 0 0 1.01 1132.20 971.5)">.</text><text transform="matrix(0.953 0 0 1.01 1152.07 971.5)">0</text><text transform="matrix(0.953 0 0 1.01 1170.87 971.5)">0</text><text transform="matrix(0.675 0 0 1.01 1189.08 971.5)">m</text><text transform="matrix(0.695 0 0 1.01 1209.66 971.5)">V</text><text transform="matrix(0.728 0 0 0.96 21.07 1046.2)">D</text><text transform="matrix(0.702 0 0 0.96 40.54 1046.2)">C</text><path transform="matrix(1 0 0 0.96 69.20 1046.2)" d="M1.7 0V-25.8H-1.2L-6.2-21V-18.2L-1.2-22V0Z"/><text transform="matrix(0.683 0 0 0.96 77.15 1046.2)">M</text><text transform="matrix(0.686 0 0 0.96 96.97 1046.2)">&#937;</text><text transform="matrix(0.728 0 0 0.96 264.72 1046.2)">D</text><text transform="matrix(0.702 0 0 0.96 284.19 1046.2)">C</text><path transform="matrix(1 0 0 0.96 312.85 1046.2)" d="M1.7 0V-25.8H-1.2L-6.2-21V-18.2L-1.2-22V0Z"/><text transform="matrix(0.683 0 0 0.96 320.80 1046.2)">M</text><text transform="matrix(0.686 0 0 0.96 340.62 1046.2)">&#937;</text><text transform="matrix(0.728 0 0 0.96 508.37 1046.2)">D</text><text transform="matrix(0.702 0 0 0.96 527.84 1046.2)">C</text><path transform="matrix(1 0 0 0.96 556.50 1046.2)" d="M1.7 0V-25.8H-1.2L-6.2-21V-18.2L-1.2-22V0Z"/><text transform="matrix(0.683 0 0 0.96 564.45 1046.2)">M</text><text transform="matrix(0.686 0 0 0.96 584.27 1046.2)">&#937;</text><text transform="matrix(0.728 0 0 0.96 752.02 1046.2)">D</text><text transform="matrix(0.702 0 0 0.96 771.49 1046.2)">C</text><path transform="matrix(1 0 0 0.96 800.15 1046.2)" d="M1.7 0V-25.8H-1.2L-6.2-21V-18.2L-1.2-22V0Z"/><text transform="matrix(0.683 0 0 0.96 808.10 1046.2)">M</text><text transform="matrix(0.686 0 0 0.96 827.92 1046.2)">&#937;</text><text transform="matrix(0.749 0 0 0.96 22.68 1081.4)">&#916;</text><text transform="matrix(0.695 0 0 0.96 42.16 1081.4)">V</text><text transform="matrix(0.749 0 0 0.96 266.23 1081.4)">&#916;</text><text transform="matrix(0.695 0 0 0.96 285.71 1081.4)">V</text><text transform="matrix(0.988 0 0 0.96 147.52 1081.4)">6</text><text transform="matrix(1.000 0 0 0.96 165.70 1081.4)">.</text><path transform="matrix(1 0 0 0.96 195.70 1081.4)" d="M1.7 0V-25.8H-1.2L-6.2-21V-18.2L-1.2-22V0Z"/><text transform="matrix(1.000 0 0 0.96 203.90 1081.4)">2</text><text transform="matrix(0.675 0 0 0.96 222.58 1081.4)">m</text><text transform="matrix(0.695 0 0 0.96 243.16 1081.4)">V</text><text transform="matrix(0.965 0 0 0.96 409.05 1081.4)">3</text><text transform="matrix(0.953 0 0 0.96 427.87 1081.4)">0</text><text transform="matrix(0.988 0 0 0.96 446.22 1081.4)">6</text><text transform="matrix(0.675 0 0 0.96 464.88 1081.4)">m</text><text transform="matrix(0.695 0 0 0.96 485.46 1081.4)">V</text><text transform="matrix(0.769 0 0 0.96 508.49 1081.4)">E</text><text transform="matrix(0.675 0 0 0.96 526.98 1081.4)">m</text><text transform="matrix(1.000 0 0 0.768 545.50 1078.2)">p</text><text transform="matrix(1.000 0 0 0.96 569.60 1081.4)">t</text><text transform="matrix(0.871 0 0 0.768 585.66 1078.2)">y</text><text transform="matrix(0.769 0 0 0.96 752.19 1081.4)">E</text><text transform="matrix(0.675 0 0 0.96 770.68 1081.4)">m</text><text transform="matrix(1.000 0 0 0.768 789.20 1078.2)">p</text><text transform="matrix(1.000 0 0 0.96 813.30 1081.4)">t</text><text transform="matrix(0.871 0 0 0.768 829.36 1078.2)">y</text><text transform="matrix(1.000 0 0 0.96 343.40 1121.0)">f</text><text transform="matrix(1.000 0 0 0.96 362.50 1121.0)">:</text><text transform="matrix(1.000 0 0 0.96 376.30 1121.0)">2</text><text transform="matrix(1.000 0 0 0.96 394.50 1121.0)">.</text><text transform="matrix(1.000 0 0 0.96 413.90 1121.0)">7</text><text transform="matrix(0.901 0 0 0.96 433.78 1121.0)">4</text><path transform="matrix(1 0 0 0.96 462.10 1121.0)" d="M1.7 0V-25.8H-1.2L-6.2-21V-18.2L-1.2-22V0Z"/><text transform="matrix(0.901 0 0 0.96 471.38 1121.0)">4</text><text transform="matrix(0.901 0 0 0.96 490.18 1121.0)">4</text><text transform="matrix(0.771 0 0 0.96 507.84 1121.0)">H</text><text transform="matrix(1.000 0 0 0.96 527.85 1121.0)">z</text><path transform="matrix(1 0 0 0.96 615.20 1121.0)" d="M1.7 0V-25.8H-1.2L-6.2-21V-18.2L-1.2-22V0Z"/><text transform="matrix(0.698 0 0 0.96 623.94 1121.0)">G</text><text transform="matrix(0.769 0 0 0.96 642.97 1121.0)">S</text><path transform="matrix(1 0 0 0.96 729.10 1121.0)" d="M1.7 0V-25.8H-1.2L-6.2-21V-18.2L-1.2-22V0Z"/><text transform="matrix(0.962 0 0 0.96 737.49 1121.0)">k</text><text transform="matrix(1.000 0 0 0.768 774.50 1117.8)">p</text><text transform="matrix(0.965 0 0 0.96 794.05 1121.0)">o</text><text transform="matrix(1.000 0 0 0.96 818.50 1121.0)">i</text><text transform="matrix(1.000 0 0 0.96 831.25 1121.0)">n</text><text transform="matrix(1.000 0 0 0.96 855.00 1121.0)">t</text><text transform="matrix(1.000 0 0 0.96 870.05 1121.0)">s</text></g></svg>
<svg class="abs" style="left:0;top:0;filter:drop-shadow(2.2px 0 0 #000)" width="1240" height="1124" viewBox="0 0 1240 1124" font-family="Liberation Sans, sans-serif" font-size="36.0"><g fill="#000" stroke="#000" stroke-width="0.3"><path transform="matrix(1 0 0 0.96 30.50 1008.0)" d="M1.7 0V-25.8H-1.2L-6.2-21V-18.2L-1.2-22V0Z"/><text transform="matrix(1.000 0 0 0.96 43.70 1008.0)">:</text><text transform="matrix(1.000 0 0 0.96 57.50 1008.0)">2</text><text transform="matrix(1.000 0 0 0.96 75.70 1008.0)">.</text><text transform="matrix(0.953 0 0 0.96 95.57 1008.0)">0</text><text transform="matrix(0.953 0 0 0.96 114.37 1008.0)">0</text><text transform="matrix(0.675 0 0 0.96 132.58 1008.0)">m</text><text transform="matrix(0.695 0 0 0.96 153.16 1008.0)">V</text><text transform="matrix(1.000 0 0 0.96 263.45 1008.0)">2</text><text transform="matrix(1.000 0 0 0.96 287.25 1008.0)">:</text><path transform="matrix(1 0 0 0.96 330.45 1008.0)" d="M1.7 0V-25.8H-1.2L-6.2-21V-18.2L-1.2-22V0Z"/><text transform="matrix(0.953 0 0 0.96 339.12 1008.0)">0</text><text transform="matrix(0.953 0 0 0.96 357.92 1008.0)">0</text><text transform="matrix(0.675 0 0 0.96 376.13 1008.0)">m</text><text transform="matrix(0.695 0 0 0.96 396.71 1008.0)">V</text></g></svg></body></html>
